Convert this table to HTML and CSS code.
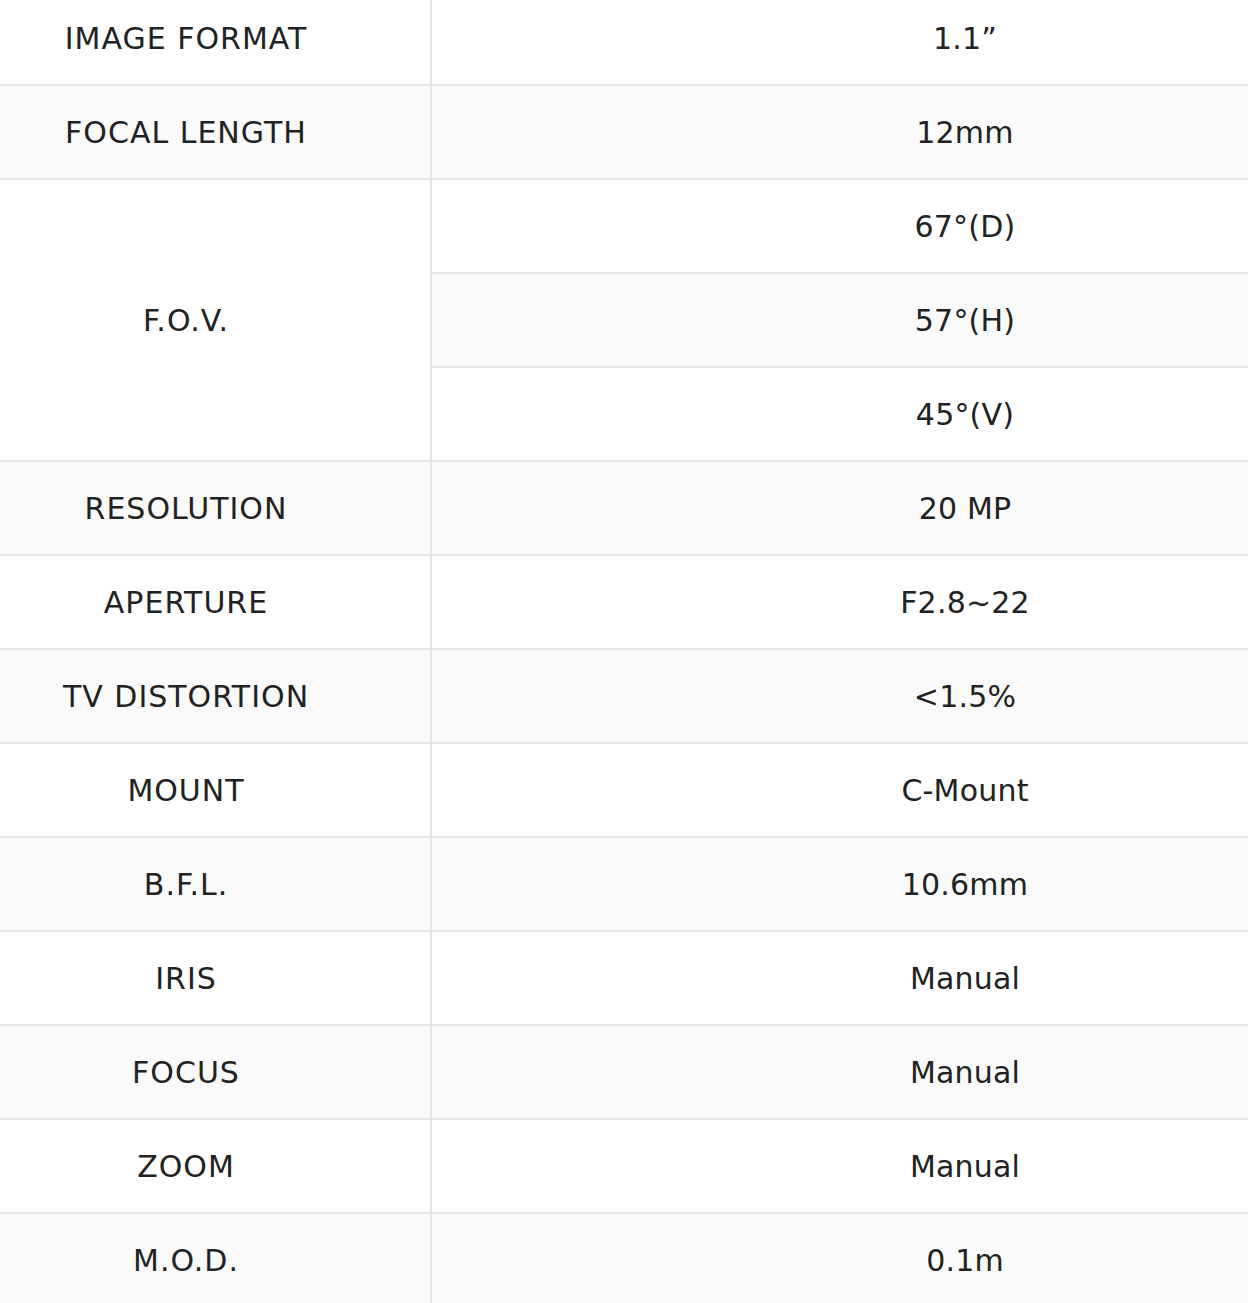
FILE: index.html
```html
<!DOCTYPE html>
<html>
<head>
<meta charset="utf-8">
<link rel="stylesheet" href="styles.css">
</head>
<body>
<table class="spec">
  <tbody>
    <tr><td class="label">IMAGE FORMAT</td><td class="value">1.1”</td></tr>
    <tr><td class="label">FOCAL LENGTH</td><td class="value">12mm</td></tr>
    <tr><td class="label" rowspan="3">F.O.V.</td><td class="value">67°(D)</td></tr>
    <tr><td class="value">57°(H)</td></tr>
    <tr><td class="value">45°(V)</td></tr>
    <tr><td class="label">RESOLUTION</td><td class="value">20 MP</td></tr>
    <tr><td class="label">APERTURE</td><td class="value">F2.8~22</td></tr>
    <tr><td class="label">TV DISTORTION</td><td class="value">&lt;1.5%</td></tr>
    <tr><td class="label">MOUNT</td><td class="value">C-Mount</td></tr>
    <tr><td class="label">B.F.L.</td><td class="value">10.6mm</td></tr>
    <tr><td class="label">IRIS</td><td class="value">Manual</td></tr>
    <tr><td class="label">FOCUS</td><td class="value">Manual</td></tr>
    <tr><td class="label">ZOOM</td><td class="value">Manual</td></tr>
    <tr><td class="label">M.O.D.</td><td class="value">0.1m</td></tr>
  </tbody>
</table>
</body>
</html>
```

FILE: styles.css
```css
html, body {
  margin: 0;
  padding: 0;
  overflow: hidden;
  background: #ffffff;
}

.spec {
  width: 1248px;
  margin-top: -8px;
  border-collapse: separate;
  border-spacing: 0;
  table-layout: fixed;
  font-family: "DejaVu Sans", Verdana, sans-serif;
  font-size: 30px;
  color: #222222;
}

.spec td {
  height: 92px;
  border-bottom: 2px solid #e6e6e6;
  text-align: center;
  vertical-align: middle;
  padding: 0;
  white-space: nowrap;
}

.spec tr:nth-child(even) td {
  background: #fafafa;
}

.spec td.label {
  width: 372px;
  padding-right: 58px;
  border-right: 2px solid #e6e6e6;
  letter-spacing: 1px;
}

.spec td.value {
  padding-left: 250px;
  letter-spacing: 0.2px;
}
```
